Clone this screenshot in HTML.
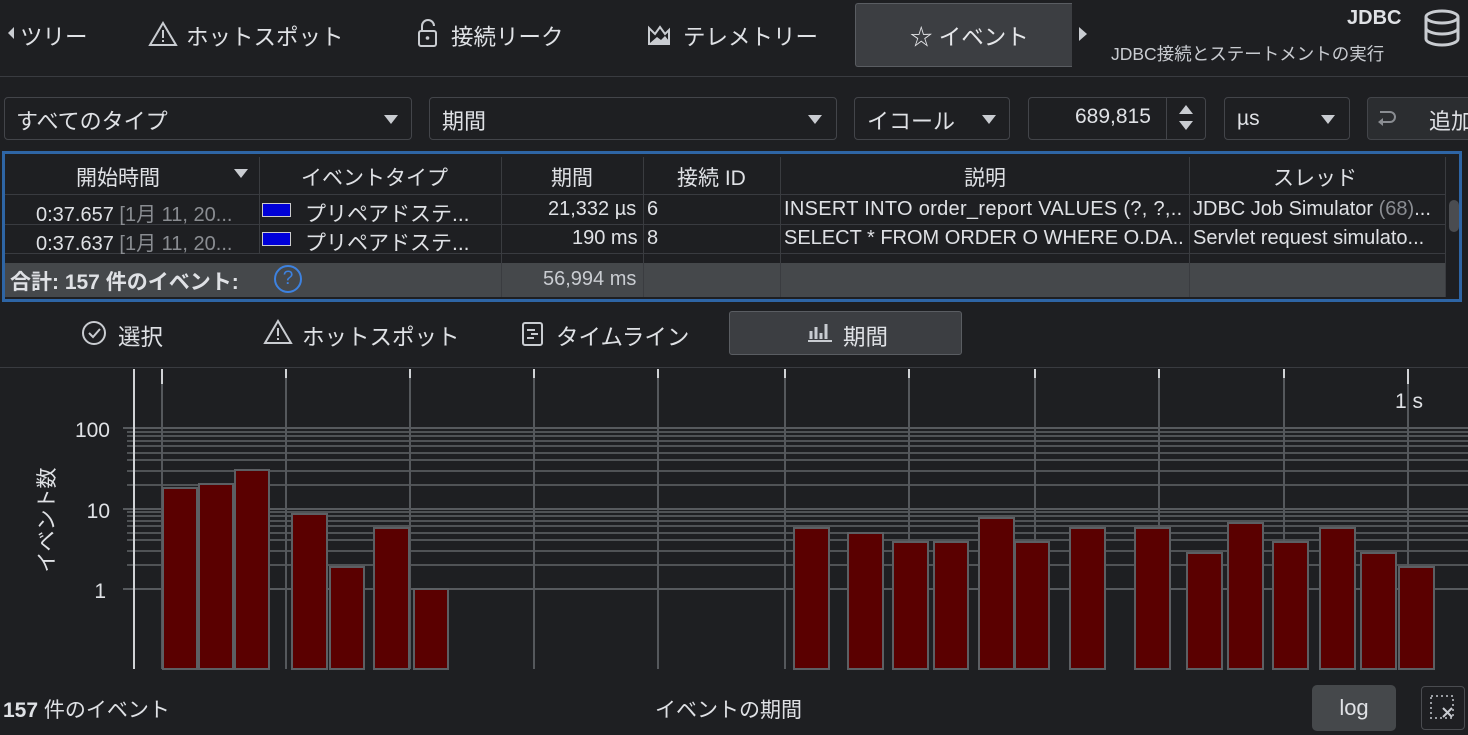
<!DOCTYPE html>
<html><head><meta charset="utf-8"><style>
body{margin:0;width:1468px;height:735px;background:#1e1f22;overflow:hidden;font-family:"Liberation Sans","Noto Sans CJK JP",sans-serif;color:#dfe1e5;position:relative}
.a{position:absolute;white-space:nowrap}
.t{font-size:22.5px;top:20px}
.box{position:absolute;border:1px solid #43454a;border-radius:4px;background:#1e1f22;box-sizing:border-box}
.tri{position:absolute;width:0;height:0;border-left:7px solid transparent;border-right:7px solid transparent;border-top:9px solid #c9ccd1}
.cell{position:absolute;font-size:20px;white-space:nowrap;overflow:hidden}
.vl{position:absolute;width:1px;background:#3a3c40}
</style></head><body>
<!-- top tabs -->
<div class="a" style="left:8px;top:27px;width:0;height:0;border-top:6px solid transparent;border-bottom:6px solid transparent;border-right:6px solid #c9ccd1"></div>
<div class="a t" style="left:20px">ツリー</div>
<svg class="a" style="left:148px;top:20px" width="30" height="28"><path d="M15 3 L28 25 H2 Z" fill="none" stroke="#c9ccd1" stroke-width="2"/><path d="M15 10v8M15 20v2" stroke="#c9ccd1" stroke-width="2"/></svg>
<div class="a t" style="left:186px">ホットスポット</div>
<svg class="a" style="left:416px;top:18px" width="24" height="32"><path d="M6 13V8a6 6 0 0 1 12 0" fill="none" stroke="#c9ccd1" stroke-width="2"/><rect x="3" y="13" width="17" height="15" rx="2" fill="none" stroke="#c9ccd1" stroke-width="2"/><circle cx="11.5" cy="20" r="1.8" fill="#c9ccd1"/></svg>
<div class="a t" style="left:451px">接続リーク</div>
<svg class="a" style="left:646px;top:22px" width="26" height="26"><path d="M3 22V6l6 6 5-7 5 7 4-4v14Z" fill="none" stroke="#c9ccd1" stroke-width="2"/><path d="M4 21l7-6 4 3 4-4 4 5v3H4z" fill="#c9ccd1"/></svg>
<div class="a t" style="left:683px">テレメトリー</div>
<div class="a" style="left:855px;top:3px;width:216px;height:62px;background:#3c3e42;border:1px solid #5a5d62;border-right:none;border-radius:3px 0 0 3px"></div>
<div class="a t" style="left:910px;color:#e6e7ea">☆ イベント</div>
<div class="a" style="left:1079px;top:27px;width:0;height:0;border-top:7px solid transparent;border-bottom:7px solid transparent;border-left:8px solid #c9ccd1"></div>
<div class="a" style="left:1347px;top:7px;font-size:20px;font-weight:bold">JDBC</div>
<div class="a" style="left:1111px;top:41px;font-size:17.5px;color:#c9ccd1">JDBC接続とステートメントの実行</div>
<svg class="a" style="left:1422px;top:9px" width="40" height="38"><ellipse cx="20" cy="8" rx="16" ry="6" fill="none" stroke="#c9ccd1" stroke-width="3"/><path d="M4 8v22c0 3 7 6 16 6s16-3 16-6V8M4 19c0 3 7 6 16 6s16-3 16-6" fill="none" stroke="#c9ccd1" stroke-width="3"/></svg>
<div class="a" style="left:0;top:76px;width:1468px;height:1px;background:#393b40"></div>
<!-- filter row -->
<div class="box" style="left:4px;top:97px;width:408px;height:43px"></div>
<div class="a" style="left:16px;top:104px;font-size:22px">すべてのタイプ</div><div class="tri" style="left:384px;top:115px"></div>
<div class="box" style="left:429px;top:97px;width:408px;height:43px"></div>
<div class="a" style="left:442px;top:104px;font-size:22px">期間</div><div class="tri" style="left:808px;top:115px"></div>
<div class="box" style="left:854px;top:97px;width:156px;height:43px"></div>
<div class="a" style="left:867px;top:104px;font-size:22px">イコール</div><div class="tri" style="left:982px;top:115px"></div>
<div class="box" style="left:1028px;top:97px;width:178px;height:43px"></div>
<div class="a" style="left:1075px;top:105px;font-size:21px">689,815</div>
<div class="a" style="left:1166px;top:98px;width:1px;height:41px;background:#43454a"></div>
<div class="a" style="left:1179px;top:105px;border-left:7px solid transparent;border-right:7px solid transparent;border-bottom:9px solid #c9ccd1"></div>
<div class="a" style="left:1179px;top:121px;border-left:7px solid transparent;border-right:7px solid transparent;border-top:9px solid #c9ccd1"></div>
<div class="box" style="left:1224px;top:97px;width:126px;height:43px"></div>
<div class="a" style="left:1237px;top:107px;font-size:21px">µs</div><div class="tri" style="left:1321px;top:115px"></div>
<div class="box" style="left:1367px;top:97px;width:120px;height:43px;background:#2b2d30"></div>
<svg class="a" style="left:1374px;top:106px" width="26" height="26"><path d="M6 6h10a5 5 0 0 1 0 10H6" fill="none" stroke="#8a8d92" stroke-width="2"/><path d="M9 12l-5 4 5 4z" fill="#8a8d92"/></svg>
<div class="a" style="left:1429px;top:104px;font-size:22px">追加</div>
<!-- table -->
<div class="a" style="left:2px;top:151px;width:1460px;height:151px;border:3px solid #2e65a5;box-sizing:border-box"></div>
<div class="a" style="left:5px;top:194px;width:1440px;height:1px;background:#393b40"></div>
<div class="a" style="left:5px;top:224px;width:1440px;height:1px;background:#393b40"></div>
<div class="a" style="left:5px;top:253px;width:1440px;height:1px;background:#393b40"></div>
<div class="a" style="left:5px;top:263px;width:1440px;height:34px;background:#45484b"></div>
<div class="vl" style="left:259px;top:157px;height:97px"></div>
<div class="vl" style="left:501px;top:157px;height:140px"></div>
<div class="vl" style="left:643px;top:157px;height:140px"></div>
<div class="vl" style="left:780px;top:157px;height:140px"></div>
<div class="vl" style="left:1189px;top:157px;height:140px"></div>
<div class="vl" style="left:1445px;top:157px;height:140px"></div>
<div class="a" style="left:1449px;top:200px;width:10px;height:32px;border-radius:5px;background:#4a4c50"></div>
<div class="cell" style="left:76px;top:162px;font-size:21px">開始時間</div>
<div class="tri" style="left:234px;top:169px"></div>
<div class="cell" style="left:301px;top:162px;font-size:21px">イベントタイプ</div>
<div class="cell" style="left:551px;top:162px;font-size:21px">期間</div>
<div class="cell" style="left:677px;top:162px;font-size:21px">接続 ID</div>
<div class="cell" style="left:964px;top:162px;font-size:21px">説明</div>
<div class="cell" style="left:1273px;top:162px;font-size:21px">スレッド</div>
<div class="cell" style="left:36px;top:198px">0:37.657 <span style="color:#8a8d92">[1月 11, 20...</span></div>
<div class="cell" style="left:36px;top:227px">0:37.637 <span style="color:#8a8d92">[1月 11, 20...</span></div>
<div class="a" style="left:262px;top:203px;width:27px;height:12px;background:#0000d8;border:1px solid #ccc"></div>
<div class="a" style="left:262px;top:232px;width:27px;height:12px;background:#0000d8;border:1px solid #ccc"></div>
<div class="cell" style="left:305px;top:198px;font-size:21px">プリペアドステ...</div>
<div class="cell" style="left:305px;top:227px;font-size:21px">プリペアドステ...</div>
<div class="cell" style="left:548px;top:198px">21,332 µs</div>
<div class="cell" style="left:572px;top:227px">190 ms</div>
<div class="cell" style="left:647px;top:198px">6</div>
<div class="cell" style="left:647px;top:227px">8</div>
<div class="cell" style="left:784px;top:198px;width:400px;letter-spacing:0.3px">INSERT INTO order_report VALUES (?, ?,...</div>
<div class="cell" style="left:784px;top:227px;width:400px">SELECT * FROM ORDER O WHERE O.DA...</div>
<div class="cell" style="left:1193px;top:198px;width:252px">JDBC Job Simulator <span style="color:#8a8d92">(68)</span>...</div>
<div class="cell" style="left:1193px;top:227px;width:252px">Servlet request simulato...</div>
<div class="cell" style="left:10px;top:266px;font-weight:bold;font-size:21px">合計: 157 件のイベント:</div>
<div class="a" style="left:274px;top:265px;width:24px;height:24px;border:2px solid #3d82e0;border-radius:50%;color:#3d82e0;font-size:19px;text-align:center;line-height:24px">?</div>
<div class="cell" style="left:543px;top:268px;color:#c9ccd1">56,994 ms</div>
<!-- bottom tabs -->
<svg class="a" style="left:81px;top:320px" width="28" height="28"><circle cx="13" cy="13" r="11" fill="none" stroke="#c9ccd1" stroke-width="2"/><path d="M8 13l4 4 7-8" fill="none" stroke="#c9ccd1" stroke-width="2"/></svg>
<div class="a t" style="left:118px;top:320px">選択</div>
<svg class="a" style="left:263px;top:318px" width="30" height="28"><path d="M15 3 L28 25 H2 Z" fill="none" stroke="#c9ccd1" stroke-width="2"/><path d="M15 10v8M15 20v2" stroke="#c9ccd1" stroke-width="2"/></svg>
<div class="a t" style="left:302px;top:320px">ホットスポット</div>
<svg class="a" style="left:520px;top:320px" width="26" height="28"><rect x="3" y="3" width="19" height="22" rx="2" fill="none" stroke="#c9ccd1" stroke-width="2"/><path d="M7 10h8M11 14h7M7 18h7" stroke="#c9ccd1" stroke-width="2"/></svg>
<div class="a t" style="left:556px;top:320px">タイムライン</div>
<div class="a" style="left:729px;top:311px;width:233px;height:44px;background:#3c3e42;border:1px solid #5a5d62;box-sizing:border-box;border-radius:3px"></div>
<svg class="a" style="left:805px;top:321px" width="30" height="24"><path d="M3 20h24" stroke="#c9ccd1" stroke-width="2"/><path d="M6 10v8M11 6v12M16 12v6M21 3v15" stroke="#c9ccd1" stroke-width="3"/></svg>
<div class="a t" style="left:843px;top:320px">期間</div>
<div class="a" style="left:0;top:367px;width:1468px;height:1px;background:#393b40"></div>
<!-- chart -->
<svg class="a" style="left:0;top:0" width="1468" height="735">
<g stroke="#575a5e" stroke-width="2">
<path d="M123 428H1468M123 509H1468M123 589H1468"/>
</g>
<g stroke="#505356" stroke-width="2">
<path d="M127 565H1468M127 551H1468M127 540H1468M127 533H1468M127 526H1468M127 521H1468M127 516H1468M127 512H1468M127 485H1468M127 471H1468M127 460H1468M127 453H1468M127 446H1468M127 441H1468M127 436H1468M127 432H1468"/>
</g>
<g stroke="#55585c" stroke-width="2">
<path d="M162 378V669M286 378V669M410 378V669M534 378V669M658 378V669M785 378V669M909 378V669M1035 378V669M1159 378V669M1284 378V669M1408 378V669"/>
</g>
<g stroke="#d0d2d5" stroke-width="2">
<path d="M162 369V384M286 369V378M410 369V378M534 369V378M658 369V378M785 369V378M909 369V378M1035 369V378M1159 369V378M1284 369V378M1408 369V384"/>
<path d="M134 369V669"/>
</g>
<g fill="#5a0000" stroke="#5c5f63" stroke-width="2">
<rect x="163" y="488" width="34" height="181"/><rect x="199" y="484" width="34" height="185"/><rect x="235" y="470" width="34" height="199"/>
<rect x="292" y="514" width="35" height="155"/><rect x="330" y="567" width="34" height="102"/><rect x="374" y="528" width="35" height="141"/><rect x="414" y="589" width="34" height="80"/>
<rect x="794" y="528" width="35" height="141"/><rect x="848" y="533" width="35" height="136"/><rect x="893" y="542" width="35" height="127"/><rect x="934" y="542" width="34" height="127"/>
<rect x="979" y="518" width="35" height="151"/><rect x="1015" y="542" width="34" height="127"/><rect x="1070" y="528" width="35" height="141"/><rect x="1135" y="528" width="35" height="141"/>
<rect x="1187" y="553" width="35" height="116"/><rect x="1228" y="523" width="35" height="146"/><rect x="1273" y="542" width="35" height="127"/><rect x="1320" y="528" width="35" height="141"/>
<rect x="1361" y="553" width="35" height="116"/><rect x="1399" y="567" width="35" height="102"/>
</g>
<g fill="#dfe1e5" font-family="Liberation Sans, sans-serif" font-size="21" text-anchor="end">
<text x="110" y="437">100</text><text x="110" y="518">10</text><text x="106" y="598">1</text>
<text x="1423" y="408">1 s</text>
</g>
<text transform="translate(54 520) rotate(-90)" text-anchor="middle" fill="#dfe1e5" font-size="21" font-family="Liberation Sans, Noto Sans CJK JP, sans-serif">イベント数</text>
</svg>
<div class="a" style="left:3px;top:694px;font-size:21px"><b>157</b> 件のイベント</div>
<div class="a" style="left:655px;top:694px;font-size:21px">イベントの期間</div>
<div class="a" style="left:1312px;top:685px;width:84px;height:46px;background:#45484b;border-radius:5px;font-size:22px;text-align:center;line-height:46px">log</div>
<div class="a" style="left:1421px;top:686px;width:44px;height:44px;border:1px solid #4a4c50;border-radius:4px;box-sizing:border-box"></div>
<svg class="a" style="left:1428px;top:693px" width="30" height="30"><rect x="3" y="3" width="22" height="22" fill="none" stroke="#9a9da2" stroke-width="2" stroke-dasharray="2 3"/><path d="M15 15l9 9M24 15l-9 9" stroke="#c9ccd1" stroke-width="2"/></svg>
</body></html>
